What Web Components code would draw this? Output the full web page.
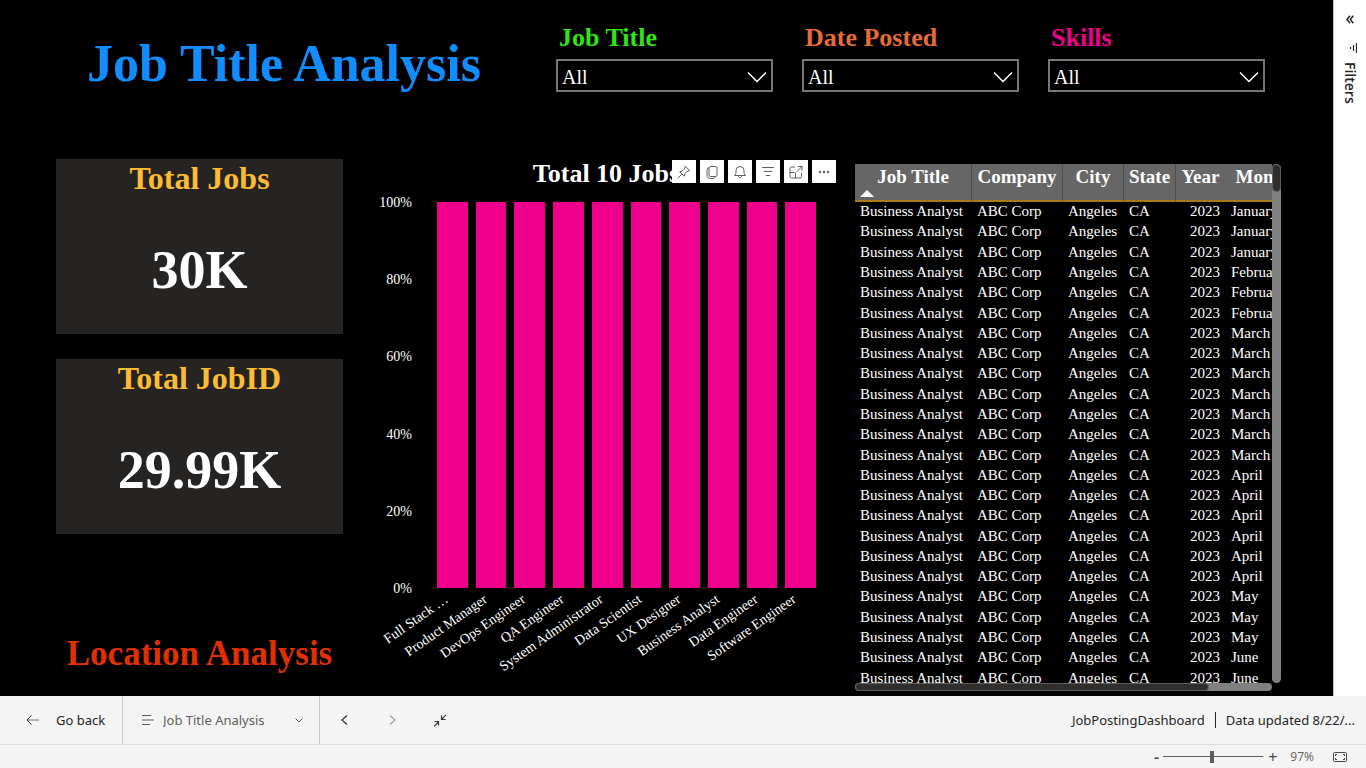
<!DOCTYPE html>
<html lang="en">
<head>
<meta charset="utf-8">
<title>JobPostingDashboard</title>
<style>
  body { margin: 0; background: #000; font-family: "Liberation Serif", "Times New Roman", serif; }
</style>
</head>
<body>
<report-app></report-app>
<script>
const define = (name, render) => customElements.define(name, class extends HTMLElement {
  connectedCallback() {
    if (this.shadowRoot) return;
    const t = document.createElement('template');
    t.innerHTML = render(this);
    this.attachShadow({ mode: 'open' }).append(t.content.cloneNode(true));
  }
});

const icons = {
  chevron: [20, 12, '<path d="M1 1.500 10 10.500 19 1.500" stroke-width="1.500"/>'],
  chevronSmall: [8, 5, '<path d="M.5.5 4 4 7.500.5"/>'],
  prev: [7, 10, '<path d="M6 .5 1 5l5 4.500" stroke-width="1.200"/>'],
  next: [7, 10, '<path d="M1 .5 6 5 1 9.500" stroke-width="1.200"/>'],
  back: [13, 10, '<path d="M5.500.5 1 5l4.500 4.500"/><path d="M1 5h12" opacity=".6"/>'],
  pages: [13, 10, '<path d="M1 .5h9M1 5h12M1 9.500h8"/>'],
  collapse: [14, 13, '<path d="M13 .8 8.500 5.300M8.500 1.500v4h4M1 12.300l4.500-4.500M1.500 7.500h4v4" stroke-width="1.200"/>'],
  pin: [14, 14, '<path d="M8.300 1.200 12.800 5.700 9.800 6.800 8 8.600 7.300 11.300 2.700 6.700 5.400 6 7.200 4.200ZM4.800 9.200 1 13"/>'],
  copy: [14, 14, '<rect x="4" y="1.500" width="8" height="10" rx="1.500"/><path d="M4 3C2.500 3 2 3.800 2 5v5c0 2.200 1.300 3.500 3.500 3.500H8c1 0 2-.5 2-2"/>'],
  bell: [14, 14, '<path d="M1.500 10.500h11L11 8.200V5.500a4 4 0 0 0-8 0v2.700ZM5.500 11c0 2 3 2 3 0"/>'],
  filter: [14, 14, '<path d="M1 2.500h12M3 6.500h8M5 10.500h4"/>'],
  focus: [14, 14, '<path d="M6 2H2.500Q1 2 1 3.500v8Q1 13 2.500 13H11q1.500 0 1.500-1.500V8M1 7.500h4.500q1 0 1 1V13M7.500 7 13 1.500M9 1.500h4v4"/>'],
  more: [14, 14, '<g fill="currentColor" stroke="none"><circle cx="3" cy="7" r="1.200"/><circle cx="7" cy="7" r="1.200"/><circle cx="11" cy="7" r="1.200"/></g>'],
  expandPane: [8, 9, '<path d="M4 .8 1 4.500l3 3.700M7.300.8l-3 3.700 3 3.700" stroke-width="1.500"/>'],
  paneFilter: [9, 10, '<path d="M8.500 0v10M5.500 2v6M2.500 4v2" stroke-width="1.200"/>'],
  fit: [14, 10, '<rect x=".5" y=".5" width="13" height="9" rx="1"/><path d="M2.500 4V2.500H4M10 2.500h1.500V4M11.500 6v1.500H10M4 7.500H2.500V6"/>'],
  sortUp: [14, 7, '<path d="M0 7 7 0l7 7Z" fill="currentColor" stroke="none"/>']
};

define('ui-icon', el => {
  const [w, h, body] = icons[el.getAttribute('name')];
  return `<style>:host{display:inline-flex;flex:none}svg{display:block;fill:none;stroke:currentColor}</style>
  <svg width="${w}" height="${h}" viewBox="0 0 ${w} ${h}" aria-hidden="true">${body}</svg>`;
});

define('report-slicer', () => `
<style>
  :host { display: block; width: 217px; }
  label { display: block; margin: 0 0 6px 3px; font: bold 26px/30px "Liberation Serif", serif; color: var(--accent); }
  .box { display: grid; grid-template-columns: 1fr; align-items: center; }
  select { grid-area: 1 / 1; appearance: none; width: 100%; height: 33px; padding: 2px 4px 0; border: 2px solid #767676;
    border-radius: 0; background: #000; color: #fff; font: 20px/28px "Liberation Serif", serif; }
  ui-icon { grid-area: 1 / 1; justify-self: end; margin-right: 6px; margin-top: 2px; color: #fff; pointer-events: none; }
</style>
<label for="s"><slot></slot></label>
<div class="box"><select id="s"><option>All</option></select><ui-icon name="chevron"></ui-icon></div>`);

define('kpi-card', () => `
<style>
  :host { display: block; height: 175px; background: #252423; text-align: center; font-weight: bold; }
  h2 { margin: 0; font-size: 32px; line-height: 38px; color: #ffbb33; }
  p { margin: 0; padding-top: 42px; font-size: 54px; line-height: 62px; color: #fff; }
</style>
<h2><slot name="title"></slot></h2><p><slot></slot></p>`);

define('visual-toolbar', () => `
<style>
  :host { display: flex; gap: 4px; }
  button { display: grid; place-items: center; width: 24px; height: 23px; padding: 0; border: 0; background: #fff; color: #605e5c; }
</style>` + [['pin', 'Pin visual'], ['copy', 'Copy visual'], ['bell', 'Set alert'], ['filter', 'Filters'], ['focus', 'Focus mode'], ['more', 'More options']]
  .map(([n, l]) => `<button aria-label="${l}"><ui-icon name="${n}"></ui-icon></button>`).join(''));

const categories = ['Full Stack …', 'Product Manager', 'DevOps Engineer', 'QA Engineer', 'System Administrator',
  'Data Scientist', 'UX Designer', 'Business Analyst', 'Data Engineer', 'Software Engineer'];

define('bar-chart', () => `
<style>
  :host { display: block; position: relative; color: #fff; }
  h2 { margin: 0 0 13px 14px; font-size: 26px; line-height: 30px; text-align: center; }
  visual-toolbar { position: absolute; top: 1px; right: 2px; }
  .plot { display: grid; grid-template-columns: 52px 1fr; column-gap: 25px; padding-right: 22px; }
  .axis { display: flex; flex-direction: column; justify-content: space-between; margin: -7px 0 -9px; text-align: right; font-size: 14px; line-height: 16px; }
  .bars { display: flex; gap: 8px; height: 386px; }
  .bar { flex: 1; background: #ee008c; }
  .labels { grid-column: 2; display: flex; gap: 8px; height: 90px; }
  .labels div { flex: 1; position: relative; }
  .labels span { position: absolute; top: 2px; right: 21px; white-space: nowrap; font-size: 14px; line-height: 16px;
    transform: rotate(-35deg); transform-origin: 100% 50%; }
</style>
<h2>Total 10 Jobs</h2>
<visual-toolbar></visual-toolbar>
<div class="plot">
  <div class="axis">${[100, 80, 60, 40, 20, 0].map(v => `<span>${v}%</span>`).join('')}</div>
  <div class="bars">${categories.map(() => '<div class="bar"></div>').join('')}</div>
  <div class="labels">${categories.map(c => `<div><span>${c}</span></div>`).join('')}</div>
</div>`);

const months = [['January', 3], ['February', 3], ['March', 7], ['April', 6], ['May', 3], ['June', 2]]
  .flatMap(([m, n]) => Array(n).fill(m));

define('job-table', () => `
<style>
  :host { display: grid; grid-template: minmax(0, 1fr) 8px / minmax(0, 1fr) 9px; color: #fff; }
  .view { overflow: auto; scrollbar-width: none; }
  table { table-layout: fixed; width: 446px; height: calc(100% + 6px); border-collapse: separate; border-spacing: 0; font-size: 15px; line-height: 18px; }
  th { height: 36px; padding: 0; background: #666; border-bottom: 2px solid #a87a1c; border-right: 1px solid #4d4d4d;
    box-sizing: border-box; font-size: 19px; line-height: 26px; vertical-align: top; }
  th ui-icon { display: flex; margin: 0 0 0 5px; }
  th:nth-child(n+5) { border-right-color: #666; }
  thead tr { height: 38px; }
  td { padding: 0 0 2px 5px; white-space: nowrap; }
  td:nth-child(5) { text-align: right; padding: 0 6px 2px 0; }
  .v, .h { background: #808080; border-radius: 5px; }
  .v i { display: block; box-sizing: border-box; height: 28px; border: 1px solid #605e5c; border-radius: 5px; background: #2f2e2d; }
  .h i { display: block; box-sizing: border-box; width: 85%; height: 8px; border: 1px solid #605e5c; border-radius: 5px; background: #2f2e2d; }
</style>
<div class="view"><table>
  <colgroup><col style="width:117px"><col style="width:91px"><col style="width:61px"><col style="width:52px"><col style="width:50px"><col style="width:75px"></colgroup>
  <thead><tr><th>Job Title<ui-icon name="sortUp"></ui-icon></th><th>Company</th><th>City</th><th>State</th><th>Year</th><th>Month</th></tr></thead>
  <tbody>${months.map(m => `<tr><td>Business Analyst</td><td>ABC Corp</td><td>Angeles</td><td>CA</td><td>2023</td><td>${m}</td></tr>`).join('')}</tbody>
</table></div>
<div class="v"><i></i></div>
<div class="h"><i></i></div>`);

define('filters-pane', () => `
<style>
  :host { display: flex; flex-direction: column; align-items: center; box-sizing: border-box; width: 33px; padding-top: 15px;
    background: #fff; border-left: 1px solid #c8c6c4; color: #252423; }
  button { display: grid; place-items: center; padding: 0; border: 0; background: none; color: inherit; }
  ui-icon[name=paneFilter] { margin: 19px 0 0 5px; }
  h2 { margin: 9px 0 0; writing-mode: vertical-rl; font: 600 14px/20px "Open Sans", sans-serif; }
</style>
<button aria-label="Expand filters"><ui-icon name="expandPane"></ui-icon></button>
<ui-icon name="paneFilter"></ui-icon>
<h2>Filters</h2>`);

define('page-bar', () => `
<style>
  :host { display: flex; height: 49px; box-sizing: border-box; border-bottom: 1px solid #dcdcdc; background: #f4f4f4;
    font: 13px/20px "Noto Sans", sans-serif; color: #252423; }
  button { display: flex; align-items: center; padding: 0; border: 0; background: none; font: inherit; color: inherit; }
  .back { box-sizing: border-box; width: 123px; gap: 17px; padding-left: 26px; border-right: 1px solid #c8c8c8; white-space: nowrap; }
  .page { display: grid; grid-template-columns: 1fr; align-items: center; box-sizing: border-box; width: 197px; border-right: 1px solid #c8c8c8; color: #605e5c; }
  .page > * { grid-area: 1 / 1; }
  .page ui-icon { pointer-events: none; }
  .page ui-icon:first-child { margin-left: 18px; z-index: 1; }
  .page ui-icon:last-child { justify-self: end; margin-right: 16px; }
  select { appearance: none; height: 48px; padding: 0 36px 0 40px; border: 0; background: none; font: inherit; color: inherit; }
  .nav { width: 48px; justify-content: center; color: #323130; }
  .nav:disabled { color: #a19f9d; }
  .info { display: flex; align-items: center; margin-left: auto; padding-right: 11px; gap: 10px; white-space: nowrap; }
  .info i { width: 1px; height: 16px; background: #252423; }
</style>
<button class="back"><ui-icon name="back"></ui-icon>Go back</button>
<div class="page"><ui-icon name="pages"></ui-icon><select aria-label="Page"><option>Job Title Analysis</option></select><ui-icon name="chevronSmall"></ui-icon></div>
<button class="nav" aria-label="Previous page"><ui-icon name="prev"></ui-icon></button>
<button class="nav" aria-label="Next page" disabled><ui-icon name="next"></ui-icon></button>
<button class="nav" aria-label="Exit full screen"><ui-icon name="collapse"></ui-icon></button>
<div class="info"><span>JobPostingDashboard</span><i></i><span>Data updated 8/22/...</span></div>`);

define('zoom-bar', () => `
<style>
  :host { display: flex; align-items: center; justify-content: flex-end; height: 23px; padding-right: 19px; background: #f4f4f4;
    font: 12px/16px "Open Sans", sans-serif; color: #605e5c; }
  button { display: grid; place-items: center; padding: 0; border: 0; background: none; font: 16px/16px "Open Sans", sans-serif; color: #484644; }
  button:first-of-type { font-weight: 600; }
  input { appearance: none; width: 100px; height: 12px; margin: 0 5px 0 4px; background: linear-gradient(#605e5c, #605e5c) center / 100% 1px no-repeat; }
  input::-webkit-slider-thumb { appearance: none; width: 4px; height: 12px; background: #605e5c; }
  span { margin: 0 19px 0 13px; }
</style>
<button aria-label="Zoom out">-</button>
<input type="range" aria-label="Zoom" min="0" max="100" value="49">
<button aria-label="Zoom in">+</button>
<span>97%</span>
<button aria-label="Fit to page"><ui-icon name="fit"></ui-icon></button>`);

define('report-app', () => `
<style>
  :host { display: flex; flex-direction: column; min-height: 100vh; }
  .work { flex: 1; display: flex; }
  main { flex: 1; min-width: 0; display: flex; flex-direction: column; background: #000; }
  header { display: flex; align-items: flex-start; gap: 29px; padding: 23px 68px 0 56px; height: 136px; }
  h1 { flex: 1; margin: 0 15px 0 0; padding-top: 12px; font-size: 52px; line-height: 58px; text-align: center; white-space: nowrap; color: #118dff; }
  .content { flex: 1; display: grid; grid-template-columns: minmax(0, 287fr) minmax(0, 478fr) minmax(0, 426fr); gap: 17px; padding: 0 52px 5px 56px; }
  .kpis { display: flex; flex-direction: column; gap: 25px; }
  a { margin-top: 75px; font-weight: bold; font-size: 35px; line-height: 40px; text-align: center; text-decoration: none; color: #e03000; }
  job-table { margin-top: 5px; height: 527px; }
</style>
<div class="work">
  <main>
    <header>
      <h1>Job Title Analysis</h1>
      <report-slicer style="--accent:#30e610">Job Title</report-slicer>
      <report-slicer style="--accent:#e66c37">Date Posted</report-slicer>
      <report-slicer style="--accent:#ee008c">Skills</report-slicer>
    </header>
    <div class="content">
      <div class="kpis">
        <kpi-card><span slot="title">Total Jobs</span>30K</kpi-card>
        <kpi-card><span slot="title">Total JobID</span>29.99K</kpi-card>
        <a href="#location">Location Analysis</a>
      </div>
      <bar-chart></bar-chart>
      <job-table></job-table>
    </div>
  </main>
  <filters-pane></filters-pane>
</div>
<page-bar></page-bar>
<zoom-bar></zoom-bar>`);
</script>
</body>
</html>
